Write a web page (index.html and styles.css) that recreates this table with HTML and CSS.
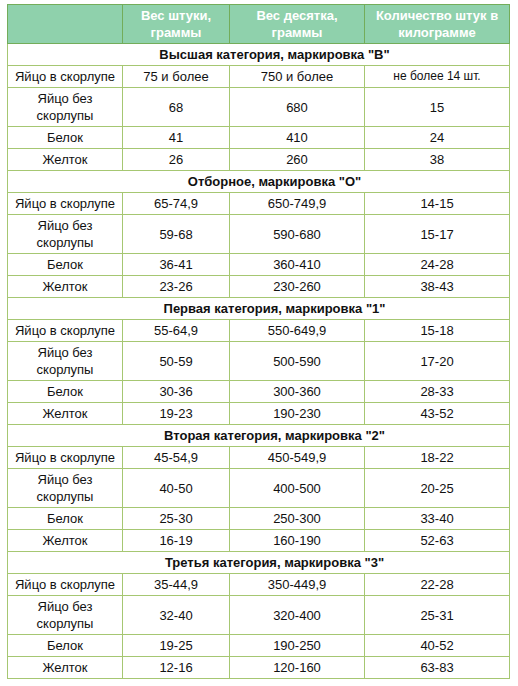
FILE: index.html
```html
<!DOCTYPE html>
<html lang="ru">
<head>
<meta charset="utf-8">
<title>Вес яиц</title>
<link rel="stylesheet" href="styles.css">
</head>
<body>
<table class="eggs">
  <colgroup>
    <col class="c1"><col class="c2"><col class="c3"><col class="c4">
  </colgroup>
  <thead>
    <tr><th></th><th>Вес штуки, граммы</th><th>Вес десятка, граммы</th><th>Количество штук в килограмме</th></tr>
  </thead>
  <tbody>
    <tr class="cat"><td colspan="4">Высшая категория, маркировка "В"</td></tr>
    <tr><td class="nw">Яйцо в скорлупе</td><td>75 и более</td><td>750 и более</td><td class="sm">не более 14 шт.</td></tr>
    <tr><td>Яйцо без скорлупы</td><td>68</td><td>680</td><td>15</td></tr>
    <tr><td>Белок</td><td>41</td><td>410</td><td>24</td></tr>
    <tr><td>Желток</td><td>26</td><td>260</td><td>38</td></tr>

    <tr class="cat"><td colspan="4">Отборное, маркировка "О"</td></tr>
    <tr><td class="nw">Яйцо в скорлупе</td><td>65-74,9</td><td>650-749,9</td><td>14-15</td></tr>
    <tr><td>Яйцо без скорлупы</td><td>59-68</td><td>590-680</td><td>15-17</td></tr>
    <tr><td>Белок</td><td>36-41</td><td>360-410</td><td>24-28</td></tr>
    <tr><td>Желток</td><td>23-26</td><td>230-260</td><td>38-43</td></tr>

    <tr class="cat"><td colspan="4">Первая категория, маркировка "1"</td></tr>
    <tr><td class="nw">Яйцо в скорлупе</td><td>55-64,9</td><td>550-649,9</td><td>15-18</td></tr>
    <tr><td>Яйцо без скорлупы</td><td>50-59</td><td>500-590</td><td>17-20</td></tr>
    <tr><td>Белок</td><td>30-36</td><td>300-360</td><td>28-33</td></tr>
    <tr><td>Желток</td><td>19-23</td><td>190-230</td><td>43-52</td></tr>

    <tr class="cat"><td colspan="4">Вторая категория, маркировка "2"</td></tr>
    <tr><td class="nw">Яйцо в скорлупе</td><td>45-54,9</td><td>450-549,9</td><td>18-22</td></tr>
    <tr><td>Яйцо без скорлупы</td><td>40-50</td><td>400-500</td><td>20-25</td></tr>
    <tr><td>Белок</td><td>25-30</td><td>250-300</td><td>33-40</td></tr>
    <tr><td>Желток</td><td>16-19</td><td>160-190</td><td>52-63</td></tr>

    <tr class="cat"><td colspan="4">Третья категория, маркировка "3"</td></tr>
    <tr><td class="nw">Яйцо в скорлупе</td><td>35-44,9</td><td>350-449,9</td><td>22-28</td></tr>
    <tr><td>Яйцо без скорлупы</td><td>32-40</td><td>320-400</td><td>25-31</td></tr>
    <tr><td>Белок</td><td>19-25</td><td>190-250</td><td>40-52</td></tr>
    <tr><td>Желток</td><td>12-16</td><td>120-160</td><td>63-83</td></tr>
  </tbody>
</table>
</body>
</html>
```
FILE: styles.css
```css
html, body {
  margin: 0;
  padding: 0;
  background: #ffffff;
}
body {
  padding: 4px 0 0 7px;
  font-family: "Liberation Sans", Arial, sans-serif;
  font-size: 13px;
  color: #111111;
}
.eggs {
  border-collapse: collapse;
  table-layout: fixed;
  width: 502px;
}
.c1 { width: 115px; }
.c2 { width: 107px; }
.c3 { width: 135px; }
.c4 { width: 145px; }
.eggs th,
.eggs td {
  border: 1px solid #a6c772;
  padding: 2px 6px;
  line-height: 17px;
  text-align: center;
  vertical-align: middle;
}
.eggs th {
  background: #8fd1ac;
  color: #ffffff;
  font-weight: bold;
  border-color: #73ad5a;
}
.eggs td:first-child {
  padding: 2px 2px;
}
.eggs .nw {
  white-space: nowrap;
}
.eggs .cat td {
  font-weight: bold;
  padding-left: 34px;
}
.eggs .sm {
  font-size: 12px;
}
```
